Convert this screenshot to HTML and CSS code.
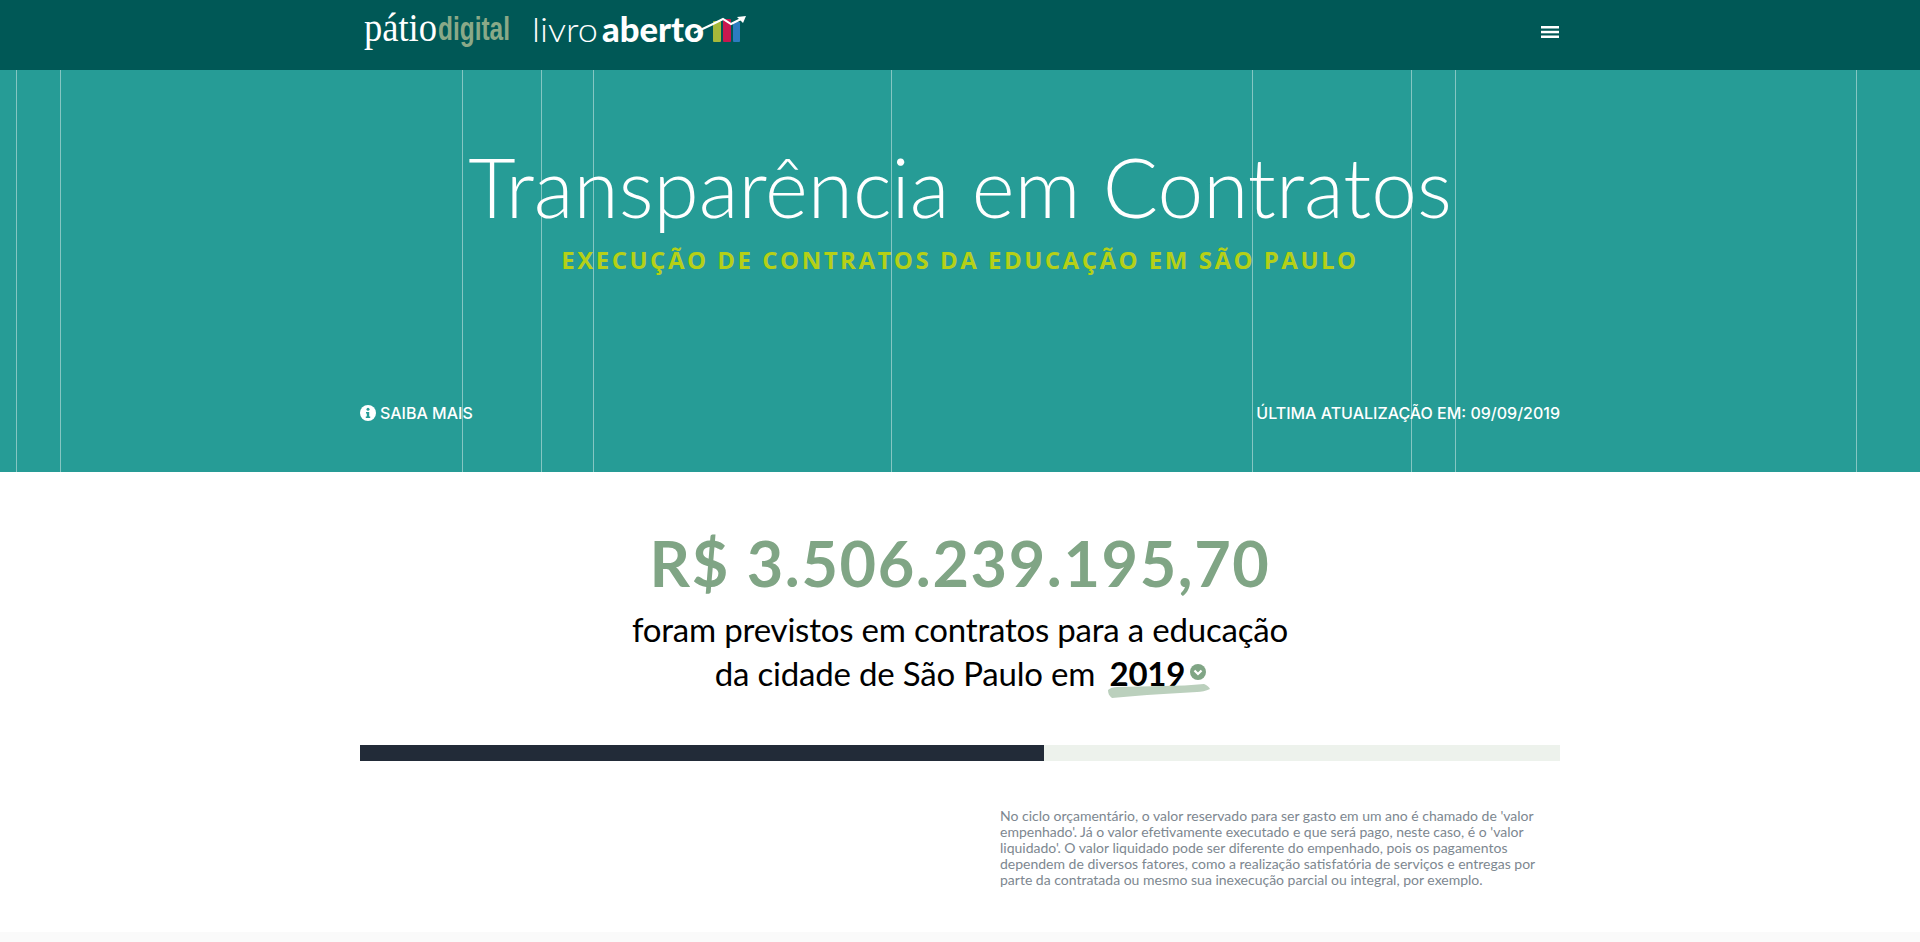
FILE: index.html
```html
<!DOCTYPE html>
<html>
<head>
    <meta name="viewport" content="width=device-width, initial-scale=1.0">
    <title>Transparência em Contratos</title>
    <link rel="stylesheet" href="styles.css">
</head>
<body>
    <header class="topbar">
        <div class="wrap topbar-inner">
            <div class="logos">
                <svg class="logo" width="148" height="70" viewBox="0 0 148 70">
                    <text class="logo-patio" x="0" y="41" textLength="73" lengthAdjust="spacingAndGlyphs">pátio</text>
                    <text class="logo-digital" x="74" y="40" textLength="72" lengthAdjust="spacingAndGlyphs">digital</text>
                </svg>
                <svg class="logo" width="217" height="70" viewBox="-2 0 217 70">
                    <text class="logo-livro" x="-2" y="42" textLength="66" lengthAdjust="spacingAndGlyphs">livro</text>
                    <text class="logo-aberto" x="68" y="42" textLength="102" lengthAdjust="spacingAndGlyphs">aberto</text>
                    <rect x="179" y="21" width="8" height="21" rx="1" fill="#a6b83a"/>
                    <rect x="189" y="19" width="8" height="23" rx="1" fill="#c8174f"/>
                    <rect x="199" y="22" width="7" height="20" rx="1" fill="#2c7cc0"/>
                    <path d="M160 33 L179 24 L189 19 L197 24 L207 19" fill="none" stroke="#fff" stroke-width="2"/>
                    <path d="M203 17 L212 16 L209 23 Z" fill="#fff"/>
                </svg>
            </div>
            <svg class="menu-icon" width="18" height="12" viewBox="0 0 18 12">
                <rect y="0" width="18" height="2.500" fill="#fff"/>
                <rect y="4.800" width="18" height="2.500" fill="#fff"/>
                <rect y="9.500" width="18" height="2.500" fill="#fff"/>
            </svg>
        </div>
    </header>

    <section class="hero">
        <div class="wrap hero-inner">
            <div class="hero-title">
                <h1>Transparência em Contratos</h1>
                <h2>EXECUÇÃO DE CONTRATOS DA EDUCAÇÃO EM SÃO PAULO</h2>
            </div>
            <div class="hero-foot">
                <a class="more">
                    <svg width="16" height="16" viewBox="0 0 16 16">
                        <circle cx="8" cy="8" r="8" fill="#fff"/>
                        <circle cx="8" cy="4.200" r="1.500" fill="#269c96"/>
                        <path d="M6 7h3.200v4.400h1V13H5.800v-1.600h1V8.500H6z" fill="#269c96"/>
                    </svg>
                    SAIBA MAIS
                </a>
                <span class="updated">ÚLTIMA ATUALIZAÇÃO EM: 09/09/2019</span>
            </div>
        </div>
    </section>

    <main class="summary">
        <div class="wrap">
            <div class="amount">R$ 3.506.239.195,70</div>
            <p class="lead">foram previstos em contratos para a educação<br>da cidade de São Paulo em
                <span class="year">2019
                    <svg class="brush" width="102" height="14" viewBox="0 0 102 14">
                        <path d="M0 6 C2 4 6 3 9 3 C24 3 40 2 56 2 C70 2 84 1 96 0 C99 1 101 3 102 5 C98 7 93 8 89 8 C72 9 55 10 39 11 C27 12 15 13 4 14 C1 12 0 9 0 6Z" fill="#b4cbb6"/>
                    </svg>
                    <svg class="chevron" width="16" height="16" viewBox="0 0 16 16">
                        <circle cx="8" cy="8" r="8" fill="#80a585"/>
                        <path d="M4.500 6.500 L8 10 L11.500 6.500" fill="none" stroke="#fff" stroke-width="2.200"/>
                    </svg>
                </span>
            </p>
            <div class="bar"><div class="bar-fill"></div></div>
            <div class="note-row">
                <p class="note">No ciclo orçamentário, o valor reservado para ser gasto em um ano é chamado de 'valor empenhado'. Já o valor efetivamente executado e que será pago, neste caso, é o 'valor liquidado'. O valor liquidado pode ser diferente do empenhado, pois os pagamentos dependem de diversos fatores, como a realização satisfatória de serviços e entregas por parte da contratada ou mesmo sua inexecução parcial ou integral, por exemplo.</p>
            </div>
        </div>
    </main>
</body>
</html>
```

FILE: styles.css
```css
* {
    box-sizing: border-box;
}
body {
    margin: 0;
    height: 942px;
    font-family: "Lato", "Noto Sans", sans-serif;
    background-color: #fafafa;
    overflow: hidden;
}
.wrap {
    width: 1200px;
    margin: 0 auto;
}
.topbar {
    height: 70px;
    background-color: #005856;
}
.topbar-inner {
    height: 100%;
    display: flex;
    justify-content: space-between;
    align-items: center;
}
.logos {
    display: flex;
    gap: 20px;
    padding-left: 4px;
}
.logo {
    display: block;
    overflow: visible;
}
.logo-patio {
    font-family: "Liberation Serif", serif;
    font-size: 40px;
    fill: #fff;
}
.logo-digital {
    font-family: "Liberation Sans", sans-serif;
    font-size: 34px;
    font-weight: bold;
    fill: #8aa988;
}
.logo-livro {
    font-size: 34px;
    font-weight: 300;
    fill: #fff;
}
.logo-aberto {
    font-size: 34px;
    font-weight: 900;
    fill: #fff;
}
.menu-icon {
    display: block;
    margin: 0 1px 6px 0;
}
.hero {
    height: 402px;
    background-color: #269c96;
    /* thin vertical lines over the whole band */
    background-image:
        linear-gradient(#85c6c2, #85c6c2),
        linear-gradient(#85c6c2, #85c6c2),
        linear-gradient(#85c6c2, #85c6c2),
        linear-gradient(#85c6c2, #85c6c2),
        linear-gradient(#85c6c2, #85c6c2),
        linear-gradient(#85c6c2, #85c6c2),
        linear-gradient(#85c6c2, #85c6c2),
        linear-gradient(#85c6c2, #85c6c2),
        linear-gradient(#85c6c2, #85c6c2),
        linear-gradient(#85c6c2, #85c6c2);
    background-repeat: no-repeat;
    background-size: 1px 100%;
    background-position: 16px 0, 60px 0, 462px 0, 541px 0, 593px 0, 891px 0, 1252px 0, 1411px 0, 1455px 0, 1856px 0;
}
.hero-inner {
    height: 100%;
    display: flex;
    flex-direction: column;
    justify-content: space-between;
    padding: 66px 0 49px;
}
.hero-title {
    text-align: center;
}
h1 {
    margin: 0;
    font-size: 82px;
    font-weight: 300;
    line-height: 100px;
    color: #fff;
}
h2 {
    margin: 6px 0 0;
    font-family: "Open Sans", sans-serif;
    font-size: 24px;
    font-weight: 700;
    line-height: 36px;
    letter-spacing: 2.500px;
    color: #b5d017;
}
.hero-foot {
    display: flex;
    justify-content: space-between;
    align-items: center;
    font-family: "Inter", sans-serif;
    font-size: 16px;
    font-weight: 500;
    color: #fff;
}
.more {
    display: flex;
    align-items: center;
    gap: 4px;
}
.summary {
    height: 460px;
    padding-top: 48px;
    text-align: center;
    background-color: #fff;
}
.amount {
    font-size: 63px;
    font-weight: 700;
    line-height: 86px;
    letter-spacing: 1.600px;
    color: #80a585;
}
.lead {
    margin: 1px 0 0;
    font-size: 33px;
    line-height: 44px;
    letter-spacing: -0.200px;
    color: #000;
}
.year {
    position: relative;
    display: inline-block;
    margin-left: 6px;
    margin-right: 20px;
    font-weight: 700;
}
.brush {
    position: absolute;
    left: -1px;
    bottom: -3px;
    opacity: .9;
}
.chevron {
    position: absolute;
    right: -21px;
    top: 13px;
}
.bar {
    height: 16px;
    margin-top: 50px;
    background-color: #edf2ec;
}
.bar-fill {
    width: 57%;
    height: 100%;
    background-color: #222b38;
}
.note-row {
    display: flex;
    justify-content: flex-end;
    margin-top: 47px;
}
.note {
    width: 560px;
    margin: 0;
    font-size: 14px;
    line-height: 16px;
    text-align: left;
    color: #7d8790;
}
```
